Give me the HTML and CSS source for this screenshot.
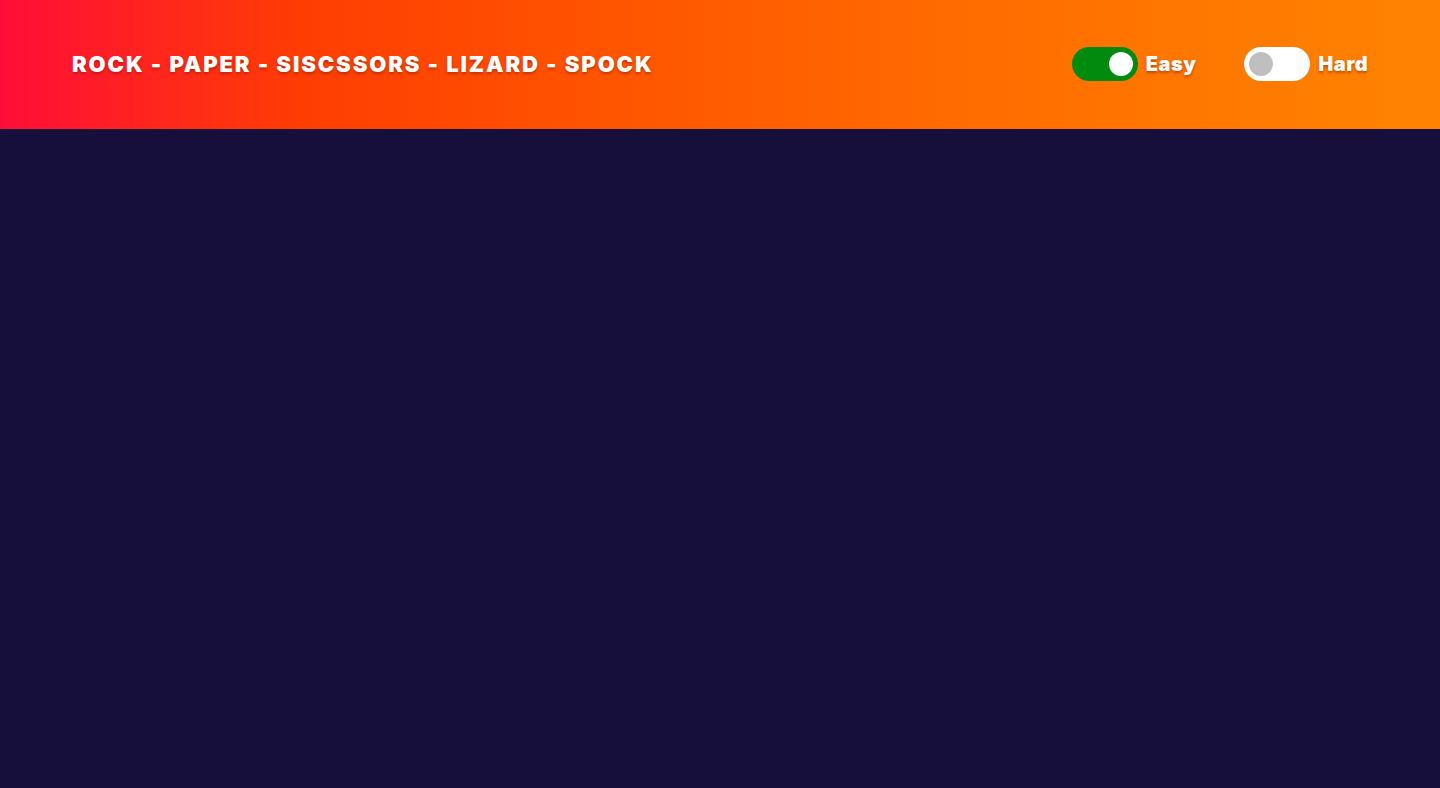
FILE: index.html
```html
<!DOCTYPE html>
<html lang="en">
<head>
<meta charset="utf-8">
<title>Rock Paper Scissors Lizard Spock</title>
<link rel="stylesheet" href="styles.css">
</head>
<body>
<header class="topbar">
  <h1 class="title">ROCK - PAPER - SISCSSORS - LIZARD - SPOCK</h1>
  <div class="modes">
    <label class="mode">
      <span class="switch switch-on"><span class="knob"></span></span>
      <span class="mode-label">Easy</span>
    </label>
    <label class="mode">
      <span class="switch switch-off"><span class="knob"></span></span>
      <span class="mode-label">Hard</span>
    </label>
  </div>
</header>
<main class="stage"></main>
</body>
</html>
```

FILE: styles.css
```css
html, body {
  margin: 0;
  padding: 0;
  height: 100%;
}
body {
  background: #170f3b;
  font-family: Inter, "Open Sans", "Liberation Sans", sans-serif;
}
.topbar {
  height: 129px;
  box-sizing: border-box;
  padding: 0 72px 2px;
  display: flex;
  align-items: center;
  justify-content: space-between;
  background: linear-gradient(90deg, #ff0d38 0%, #ff3d03 21%, #ff5200 40%, #ff6a00 65%, #ff8400 100%);
}
.title {
  margin: 0;
  color: #fff;
  font-size: 22px;
  font-weight: 900;
  letter-spacing: 1.9px;
  text-shadow: 0 2px 3px rgba(120, 20, 0, 0.45);
}
.modes {
  display: flex;
  align-items: center;
  gap: 48px;
}
.mode {
  display: flex;
  align-items: center;
  gap: 8px;
}
.switch {
  width: 66px;
  height: 34px;
  border-radius: 17px;
  display: flex;
  align-items: center;
  padding: 0 5px;
  box-sizing: border-box;
}
.switch-on {
  background: #008a0e;
  justify-content: flex-end;
}
.switch-off {
  background: #fff;
  justify-content: flex-start;
}
.knob {
  width: 24px;
  height: 24px;
  border-radius: 50%;
}
.switch-on .knob { background: #fff; }
.switch-off .knob { background: #bfbfbf; }
.mode-label {
  color: #fff;
  font-size: 20px;
  font-weight: 900;
  letter-spacing: 0.45px;
  text-shadow: 0 2px 3px rgba(120, 20, 0, 0.45);
}
.stage {
  height: calc(100% - 129px);
}
```
